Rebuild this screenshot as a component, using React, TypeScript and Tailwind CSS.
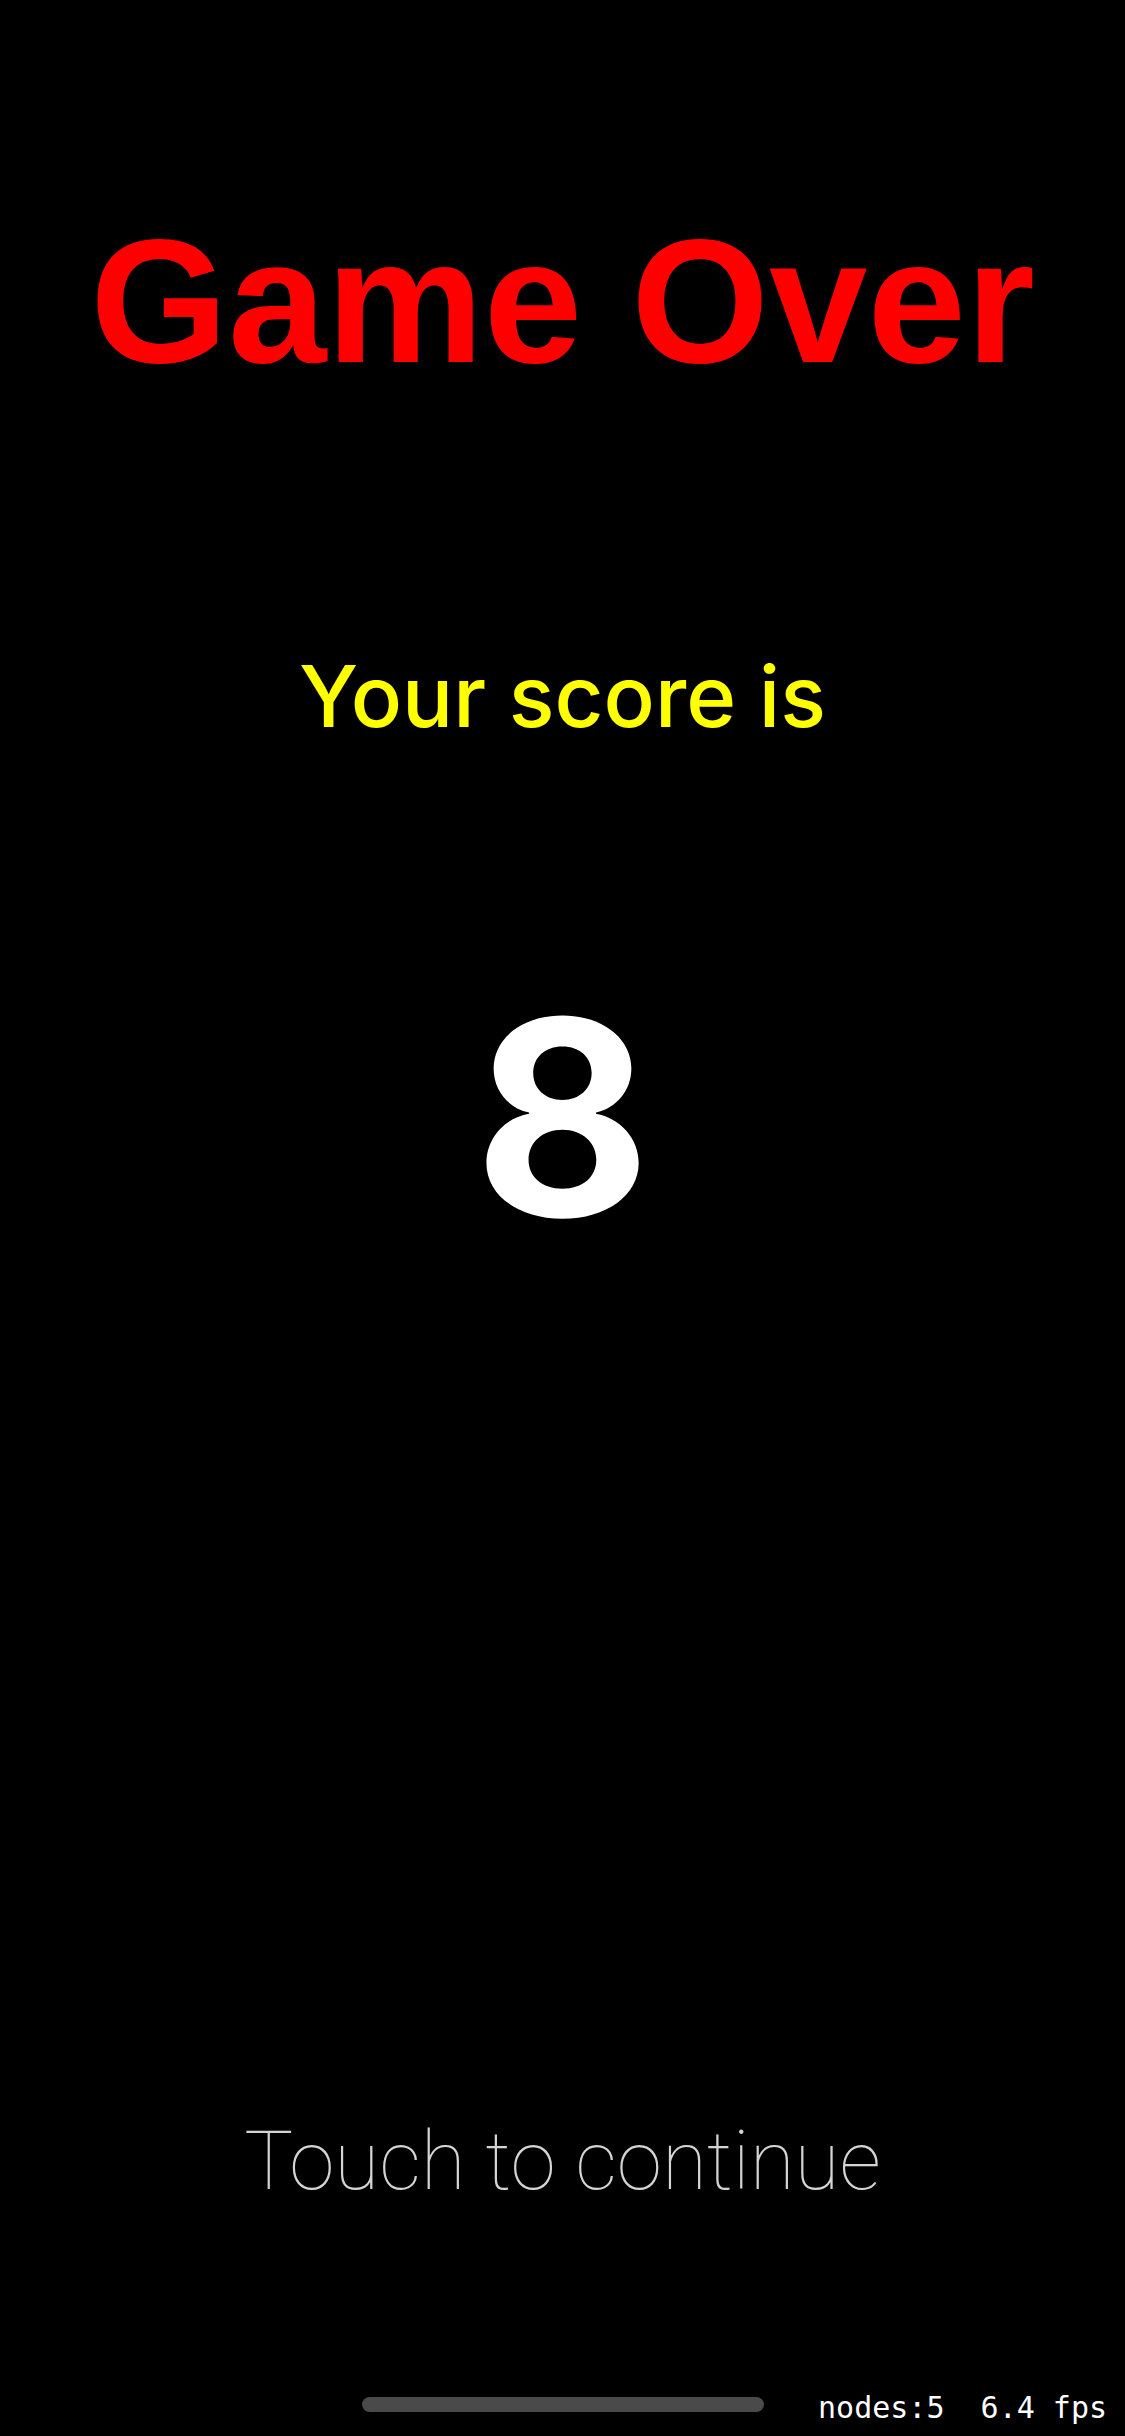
export default function App() {
  return (
    <button
      type="button"
      className="flex min-h-screen w-full flex-col items-center bg-black font-['Inter',sans-serif] whitespace-nowrap text-white"
    >
      <h1 className="mt-[205px] font-['Liberation_Sans',Arial,sans-serif] text-[177px] leading-[192px] font-bold text-[#ff0000]">
        Game Over
      </h1>
      <p className="mt-[240px] text-[85px] leading-[120px] font-medium text-[#ffff00]">Your score is</p>
      <p className="mt-[216px] text-[272px] leading-[288px] font-bold">8</p>
      <p className="mt-auto mb-[169px] font-['Roboto',sans-serif] text-[82px] leading-[120px] font-thin text-[#d4d4d4]">
        Touch to continue
      </p>
      <footer className="grid w-full grid-cols-[1fr_402px_1fr] items-start pb-[10px]">
        <span />
        <span className="mt-[7px] h-[15px] rounded-full bg-[#4a4a4a]" />
        <span className="pr-[18px] text-right font-['DejaVu_Sans_Mono',monospace] text-[30px] leading-[36px] whitespace-pre">
          nodes:5  6.4 fps
        </span>
      </footer>
    </button>
  );
}
